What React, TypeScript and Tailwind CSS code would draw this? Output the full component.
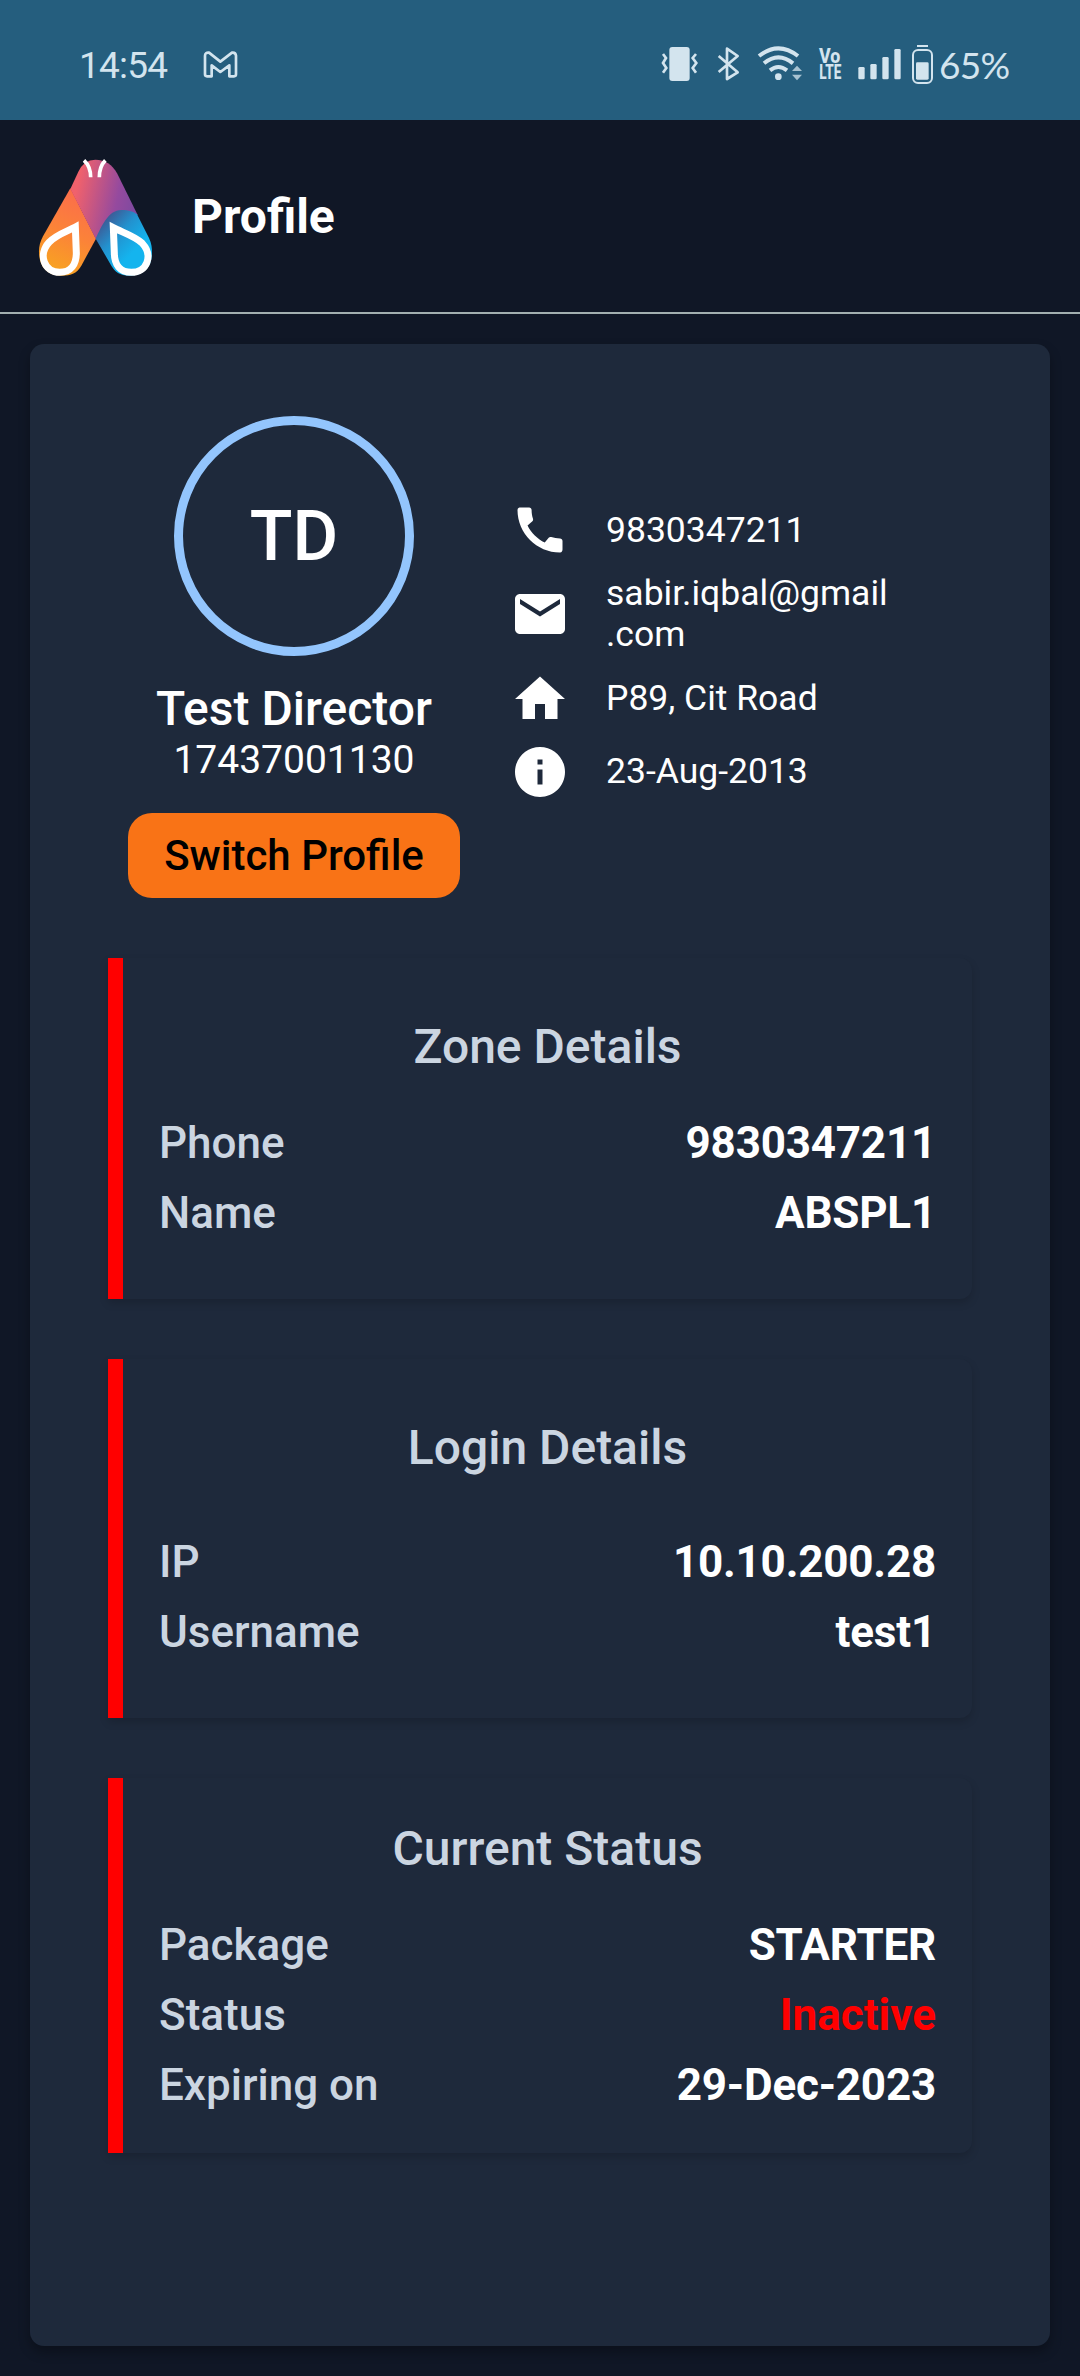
import React from 'react'
import { MdCall, MdEmail, MdHome, MdInfo } from "react-icons/md";

const contacts = [
    { icon: MdCall, text: '9830347211' },
    { icon: MdEmail, text: 'sabir.iqbal@gmail\n.com' },
    { icon: MdHome, text: 'P89, Cit Road' },
    { icon: MdInfo, text: '23-Aug-2013' },
]

const StatusBar = () => {
    return (
        <div className="flex h-[120px] items-center bg-[#255e7e] pl-[79px] pt-2 text-[#d3e4ee]">
            <span className="w-[124px] pt-[3px] text-[37px] leading-[44px] tracking-[-0.8px]">14:54</span>
            <svg className="h-[27px] w-[35px]" viewBox="0 0 105 81" fill="none" stroke="currentColor" strokeWidth="8" strokeLinejoin="round">
                <path d="M6 14 Q6 4 18 5 L52 32 L87 5 Q98 4 99 14 V70 Q99 76 93 76 H79 V43 L52 63 L26 43 V76 H12 Q6 76 6 70 Z" />
            </svg>

            <div className="ml-auto flex items-center pr-[69px]">
                {/* vibrate */}
                <svg className="h-11 w-[37px]" viewBox="60 66 111 132" fill="none" stroke="currentColor" strokeWidth="8">
                    <rect x="85" y="81" width="61" height="102" rx="9" fill="currentColor" stroke="none" />
                    <path d="M66 102 L75 114 L66 129 L76 144 L66 158" />
                    <path d="M165 102 L155 114 L166 129 L155 144 L165 158" />
                </svg>
                {/* bluetooth */}
                <svg className="ml-[19px] h-11 w-[23px]" viewBox="228 66 69 132" fill="none" stroke="currentColor" strokeWidth="8">
                    <path d="M233 108 L290 157 L258 177 V86 L290 108 L233 156" strokeLinejoin="round" />
                </svg>
                {/* wifi with traffic arrows */}
                <svg className="ml-[17px] h-11 w-[46px]" viewBox="348 66 138 132" fill="none" stroke="currentColor" strokeWidth="12">
                    <path d="M354 108 Q412 62 471 108" />
                    <path d="M369 130 Q412 94 456 130" />
                    <path d="M387 151 Q412 131 438 151" />
                    <circle cx="412" cy="170" r="10" fill="currentColor" stroke="none" />
                    <path d="M453 153 L468 137 L483 153 Z M453 164 H483 L468 181 Z" fill="currentColor" stroke="none" opacity="0.75" />
                </svg>
                {/* VoLTE */}
                <svg className="ml-[15px] h-11 w-[25px] overflow-visible" viewBox="531 66 75 132" fill="currentColor" fontWeight="800" fontSize="58">
                    <text x="534" y="129" textLength="64" lengthAdjust="spacingAndGlyphs">Vo</text>
                    <text x="535" y="177" textLength="66" lengthAdjust="spacingAndGlyphs">LTE</text>
                </svg>
                {/* signal */}
                <svg className="ml-[14px] h-11 w-[45px]" viewBox="648 66 135 132" fill="currentColor">
                    <rect x="652" y="141" width="19" height="37" rx="4" />
                    <rect x="688" y="132" width="19" height="46" rx="4" />
                    <rect x="724" y="111" width="19" height="67" rx="4" />
                    <rect x="760" y="87" width="19" height="91" rx="4" />
                </svg>
                {/* battery */}
                <svg className="ml-[9px] h-11 w-[23px]" viewBox="810 66 69 132" fill="none" stroke="currentColor" strokeWidth="6">
                    <path d="M828 78 H861" />
                    <rect x="816" y="90" width="57" height="99" rx="15" />
                    <rect x="825" y="127" width="38" height="52" rx="4" fill="currentColor" stroke="none" />
                </svg>
                <span className="ml-[5px] w-[72px] pt-[1px] font-['Lato',sans-serif] text-[37px] leading-[44px] tracking-[-0.7px]">65%</span>
            </div>
        </div>
    )
}

const Logo = () => {
    return (
        <svg className="h-[118px] w-[115px]" viewBox="55 55 345 354">
            <defs>
                <linearGradient id="orange" x1="0.6" y1="0" x2="0.3" y2="1">
                    <stop offset="0" stopColor="#fb6c4c" />
                    <stop offset="0.5" stopColor="#fb8338" />
                    <stop offset="1" stopColor="#f8a61f" />
                </linearGradient>
                <linearGradient id="purple" x1="0" y1="0.3" x2="1" y2="0.55">
                    <stop offset="0.1" stopColor="#f0616c" />
                    <stop offset="0.7" stopColor="#954a9e" />
                    <stop offset="1" stopColor="#7d4aa0" />
                </linearGradient>
                <linearGradient id="blue" x1="0.1" y1="0.15" x2="0.6" y2="0.7">
                    <stop offset="0" stopColor="#3f5590" />
                    <stop offset="0.5" stopColor="#2292cf" />
                    <stop offset="1" stopColor="#14b4ee" />
                </linearGradient>
            </defs>
            <path fill="url(#orange)" d="M152 146 L229 297 L185 378 C172 400 155 408 125 408 C80 408 58 380 58 335 C58 318 62 305 70 290 Z" />
            <path fill="url(#purple)" d="M152 148 L176 96 Q193 60 227 60 C256 60 278 74 293 102 L354 226 L228 297 Z" />
            <path fill="url(#blue)" d="M228 297 C245 262 265 211 305 211 C328 211 342 216 352 224 L388 295 C396 312 397 325 397 340 C397 384 370 408 330 408 C300 408 285 395 275 378 Z" />
            <g fill="none" stroke="#fff">
                <path strokeWidth="11" d="M193 62 Q213 80 213 113" />
                <path strokeWidth="11" d="M257 62 Q239 80 239 113" />
                <path strokeWidth="21" d="M167 262 C142 275 108 286 88 308 C54 345 74 398 120 398 C154 398 170 374 170 340 Z" />
                <path strokeWidth="21" d="M281 264 C308 278 346 290 367 310 C402 348 382 398 335 398 C301 398 284 374 284 340 Z" />
            </g>
        </svg>
    )
}

type RowProps = { label: string; value: string; danger?: boolean }

const Row = ({ label, value, danger }: RowProps) => {
    return (
        <div className="flex justify-between text-[44px] leading-[70px]">
            <span className="font-medium text-[#cbd5e1]">{label}</span>
            <span className={danger ? 'font-bold text-[#ff0000]' : 'font-bold tracking-[-0.2px] text-white'}>{value}</span>
        </div>
    )
}

const Section = ({ title, className, children }: { title: string; className: string; children: React.ReactNode }) => {
    return (
        <section className={`rounded-r-xl border-l-[15px] border-[#ff0000] px-9 bg-[#1e293b] shadow-[0_4px_8px_rgba(0,0,0,0.16)] ${className}`}>
            <h2 className="text-center text-[48px] font-medium leading-[56px] text-[#cbd5e1]">{title}</h2>
            {children}
        </section>
    )
}

const App = () => {
    return (
        <div className="h-[2376px] w-[1080px] overflow-hidden bg-[#101726] font-['Roboto',sans-serif] text-white">
            <StatusBar />

            <header className="flex h-[194px] items-center border-b-2 border-[#a3b0b0] pl-[38px] pt-[2px]">
                <Logo />
                <h1 className="ml-[39px] text-[48px] font-bold leading-[56px]">Profile</h1>
            </header>

            <main className="mx-[30px] mt-[30px] h-[2002px] rounded-[14px] bg-[#1e293b] px-[78px] pt-[72px] shadow-[0_6px_12px_rgba(0,0,0,0.3)]">
                <div className="flex h-[482px]">
                    <div className="ml-5 flex w-[332px] flex-col items-center">
                        <div className="flex size-60 items-center justify-center rounded-full border-[9px] border-[#93c5fd] text-[70px] font-medium">TD</div>
                        <h2 className="mt-[25px] text-[48px] font-medium leading-[56px]">Test Director</h2>
                        <p className="text-[39px] leading-[46px]">17437001130</p>
                        <button className="mt-[30px] h-[85px] w-full rounded-3xl bg-[#f97316] text-[42px] font-medium text-black">Switch Profile</button>
                    </div>

                    <ul className="ml-[50px] mt-[84px] flex flex-col gap-[13.3px]">
                        {contacts.map(({ icon: Icon, text }) => (
                            <li key={text} className="flex items-center">
                                <Icon className="size-[60px]" />
                                <span className="ml-9 w-[300px] whitespace-pre-line text-[35.5px] leading-[41px]">{text}</span>
                            </li>
                        ))}
                    </ul>
                </div>

                <div className="mt-[60px] flex flex-col gap-[60px]">
                    <Section title="Zone Details" className="h-[341px] pt-[61px]">
                        <div className="mt-[33px]">
                            <Row label="Phone" value="9830347211" />
                            <Row label="Name" value="ABSPL1" />
                        </div>
                    </Section>
                    <Section title="Login Details" className="h-[359px] pt-[61px]">
                        <div className="mt-[51px]">
                            <Row label="IP" value="10.10.200.28" />
                            <Row label="Username" value="test1" />
                        </div>
                    </Section>
                    <Section title="Current Status" className="h-[375px] pt-[43px]">
                        <div className="mt-[33px]">
                            <Row label="Package" value="STARTER" />
                            <Row label="Status" value="Inactive" danger />
                            <Row label="Expiring on" value="29-Dec-2023" />
                        </div>
                    </Section>
                </div>
            </main>
        </div>
    )
}

export default App
